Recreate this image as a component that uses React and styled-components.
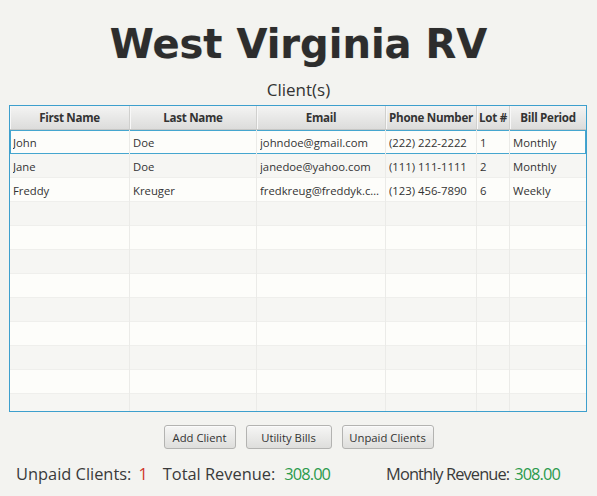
import styled, { createGlobalStyle } from "styled-components";

const GlobalStyle = createGlobalStyle`
  html, body {
    margin: 0;
    padding: 0;
    background: #f3f3f0;
  }
  body {
    font-family: "Open Sans", "Noto Sans", sans-serif;
    color: #333;
  }
`;

const clients = [
  { first: "John", last: "Doe", email: "johndoe@gmail.com", phone: "(222) 222-2222", lot: "1", period: "Monthly" },
  { first: "Jane", last: "Doe", email: "janedoe@yahoo.com", phone: "(111) 111-1111", lot: "2", period: "Monthly" },
  { first: "Freddy", last: "Kreuger", email: "fredkreug@freddyk.com", phone: "(123) 456-7890", lot: "6", period: "Weekly" },
];

const columns = [
  { key: "first", title: "First Name" },
  { key: "last", title: "Last Name" },
  { key: "email", title: "Email" },
  { key: "phone", title: "Phone Number" },
  { key: "lot", title: "Lot #" },
  { key: "period", title: "Bill Period" },
];

const COLS = "120px 127px 129px 91px 33px 1fr";
const TOTAL_ROWS = 12;

const Page = styled.div`
  width: 597px;
  height: 496px;
  display: flex;
  flex-direction: column;
  align-items: center;
  overflow: hidden;
`;

const Title = styled.h1`
  margin: 21px 0 0;
  font-family: "DejaVu Sans", Verdana, sans-serif;
  font-weight: bold;
  font-size: 40px;
  line-height: 46px;
  color: #2d2d2d;
  text-shadow: 0 0 1px rgba(0, 0, 0, 0.25);
`;

const Subtitle = styled.div`
  margin-top: 12px;
  font-size: 17px;
  line-height: 22px;
  color: #333;
`;

const Table = styled.div`
  box-sizing: border-box;
  align-self: flex-start;
  margin: 4px 0 0 9px;
  width: 578px;
  height: 307px;
  border: 1px solid #3d9fcd;
  overflow: hidden;
  background: #fdfdfa;
`;

const HeaderRow = styled.div`
  display: grid;
  grid-template-columns: ${COLS};
  height: 24px;
  box-sizing: border-box;
  background: linear-gradient(#f4f4f3, #dcdcdb);
  border-bottom: 1px solid #c6c6c4;
`;

const HeaderCell = styled.div`
  display: flex;
  align-items: center;
  justify-content: center;
  border-right: 1px solid #d0d0ce;
  box-shadow: inset 1px 0 0 #f8f8f8;
  font-size: 11.6px;
  font-weight: bold;
  letter-spacing: -0.3px;
  color: #333;
  white-space: nowrap;
  overflow: hidden;

  &:last-child {
    border-right: none;
  }
`;

const Row = styled.div`
  display: grid;
  grid-template-columns: ${COLS};
  height: 24px;
  box-sizing: border-box;
  background: ${(p) => (p.$odd ? "#f6f6f3" : "#fdfdfa")};
  box-shadow: ${(p) => (p.$focused ? "inset 0 0 0 1px #45a6cf" : "inset 0 -1px 0 #efefec")};
`;

const Cell = styled.div`
  display: flex;
  align-items: center;
  padding-left: 3px;
  border-right: 1px solid #ebebe8;
  font-size: 11.3px;
  color: #333;
  white-space: nowrap;
  overflow: hidden;
  min-width: 0;

  &:last-child {
    border-right: none;
  }

  span {
    overflow: hidden;
    text-overflow: ellipsis;
    padding-right: 2px;
  }
`;

const Buttons = styled.div`
  margin-top: 13px;
  display: flex;
  gap: 10px;
`;

const Button = styled.button`
  width: ${(p) => p.$w}px;
  height: 24px;
  padding: 0;
  border: 1px solid #b3b3b1;
  border-radius: 3px;
  background: linear-gradient(#f6f6f5, #dededc);
  box-shadow: inset 0 1px 0 #fbfbfb;
  font-family: "Open Sans", sans-serif;
  font-size: 11.3px;
  color: #333;
`;

const Footer = styled.div`
  align-self: stretch;
  margin-top: 15px;
  padding-left: 16px;
  display: flex;
  font-size: 16.4px;
  line-height: 20px;
  color: #3a3a3a;
  white-space: nowrap;
`;

const Stat = styled.div`
  display: flex;
  gap: ${(p) => p.$gap}px;
  margin-left: ${(p) => p.$offset || 0}px;
`;

const Label = styled.span`
  letter-spacing: ${(p) => p.$tracking || 0}px;
`;

const Value = styled.span`
  color: ${(p) => (p.$tone === "bad" ? "#d0382c" : "#2b9a4c")};
  letter-spacing: ${(p) => (p.$tone === "bad" ? 0 : -0.9)}px;
`;

export default function App() {
  const rows = Array.from({ length: TOTAL_ROWS }, (_, i) => clients[i] || null);

  return (
    <>
      <GlobalStyle />
      <Page>
        <Title>West Virginia RV</Title>
        <Subtitle>Client(s)</Subtitle>
        <Table>
          <HeaderRow>
            {columns.map((c) => (
              <HeaderCell key={c.key}>{c.title}</HeaderCell>
            ))}
          </HeaderRow>
          {rows.map((r, i) => (
            <Row key={i} $odd={i % 2 === 1} $focused={i === 0}>
              {columns.map((c) => (
                <Cell key={c.key}>{r && <span>{r[c.key]}</span>}</Cell>
              ))}
            </Row>
          ))}
        </Table>
        <Buttons>
          <Button $w={72}>Add Client</Button>
          <Button $w={86}>Utility Bills</Button>
          <Button $w={92}>Unpaid Clients</Button>
        </Buttons>
        <Footer>
          <Stat $gap={7}>
            <Label>Unpaid Clients:</Label>
            <Value $tone="bad">1</Value>
          </Stat>
          <Stat $gap={9} $offset={15}>
            <Label>Total Revenue:</Label>
            <Value>308.00</Value>
          </Stat>
          <Stat $gap={5} $offset={56}>
            <Label $tracking={-0.9}>Monthly Revenue:</Label>
            <Value>308.00</Value>
          </Stat>
        </Footer>
      </Page>
    </>
  );
}
